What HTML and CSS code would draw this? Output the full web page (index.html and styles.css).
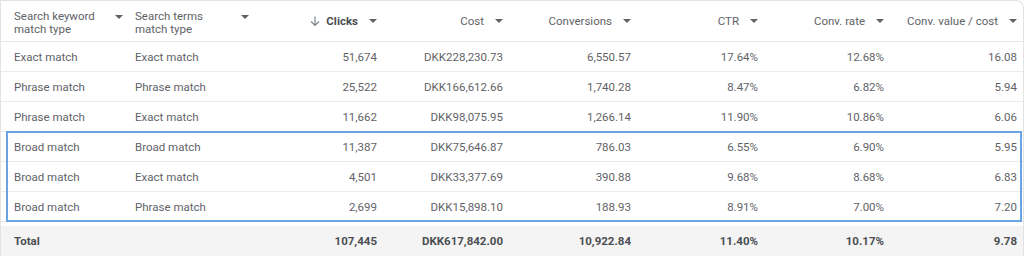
FILE: index.html
```html
<!DOCTYPE html>
<html lang="en">
<head>
  <meta charset="UTF-8" />
  <title>Match type report</title>
  <link rel="stylesheet" href="styles.css">
</head>
<body>
  <div class="card">
    <table class="report">
      <colgroup>
        <col style="width:128px">
        <col style="width:126px">
        <col style="width:128px">
        <col style="width:126px">
        <col style="width:128px">
        <col style="width:127px">
        <col style="width:126px">
        <col>
      </colgroup>
      <thead>
        <tr>
          <th class="txt"><div class="head"><span>Search keyword<br>match type</span><i class="caret"></i></div></th>
          <th class="txt"><div class="head"><span>Search terms<br>match type</span><i class="caret"></i></div></th>
          <th class="sorted"><div class="head num">
            <svg class="arrow" width="10" height="11" viewBox="0 0 10 11"><path d="M5 0.5v9M1 5.5l4 4 4-4" fill="none" stroke="#80868b" stroke-width="1.2"/></svg>
            <span>Clicks</span><i class="caret"></i></div></th>
          <th><div class="head num"><span>Cost</span><i class="caret"></i></div></th>
          <th><div class="head num"><span>Conversions</span><i class="caret"></i></div></th>
          <th><div class="head num"><span>CTR</span><i class="caret"></i></div></th>
          <th><div class="head num"><span>Conv. rate</span><i class="caret"></i></div></th>
          <th><div class="head num"><span>Conv. value / cost</span><i class="caret"></i></div></th>
        </tr>
      </thead>
      <tbody>
        <tr><td>Exact match</td><td>Exact match</td><td>51,674</td><td>DKK228,230.73</td><td>6,550.57</td><td>17.64%</td><td>12.68%</td><td>16.08</td></tr>
        <tr><td>Phrase match</td><td>Phrase match</td><td>25,522</td><td>DKK166,612.66</td><td>1,740.28</td><td>8.47%</td><td>6.82%</td><td>5.94</td></tr>
        <tr><td>Phrase match</td><td>Exact match</td><td>11,662</td><td>DKK98,075.95</td><td>1,266.14</td><td>11.90%</td><td>10.86%</td><td>6.06</td></tr>
        <tr><td>Broad match</td><td>Broad match</td><td>11,387</td><td>DKK75,646.87</td><td>786.03</td><td>6.55%</td><td>6.90%</td><td>5.95</td></tr>
        <tr><td>Broad match</td><td>Exact match</td><td>4,501</td><td>DKK33,377.69</td><td>390.88</td><td>9.68%</td><td>8.68%</td><td>6.83</td></tr>
        <tr><td>Broad match</td><td>Phrase match</td><td>2,699</td><td>DKK15,898.10</td><td>188.93</td><td>8.91%</td><td>7.00%</td><td>7.20</td></tr>
      </tbody>
      <tfoot>
        <tr><td>Total</td><td></td><td>107,445</td><td>DKK617,842.00</td><td>10,922.84</td><td>11.40%</td><td>10.17%</td><td>9.78</td></tr>
      </tfoot>
    </table>
    <div class="highlight"></div>
  </div>
</body>
</html>
```

FILE: styles.css
```css
body {
  margin: 0;
  background: #fff;
  font-family: Roboto, "Liberation Sans", sans-serif;
  font-size: 11.5px;
  color: #5f6368;
}
.card {
  position: relative;
  width: 1022px;
  border: 1px solid #e3e3e3;
  border-bottom: none;
  border-top-right-radius: 8px;
}
.report {
  width: 100%;
  table-layout: fixed;
  border-collapse: separate;
  border-spacing: 0;
}
th, td {
  padding: 0 6px;
  text-align: right;
  white-space: nowrap;
}
td:first-child, th:first-child {
  padding-left: 13px;
}
td:nth-child(1), td:nth-child(2) {
  text-align: left;
}
th {
  height: 40px;
  font-weight: 400;
  color: #5f6368;
  border-bottom: 1px solid #e8e8e8;
}
td {
  height: 29px;
  border-bottom: 1px solid #ebebeb;
}
.head {
  display: flex;
  align-items: center;
  justify-content: space-between;
  line-height: 13px;
  text-align: left;
}
.head.num {
  justify-content: flex-end;
  gap: 11px;
}
.txt .head {
  align-items: flex-start;
  padding-top: 4px;
}
.txt .caret {
  margin-top: 5px;
}
.sorted {
  font-weight: 700;
  color: #4a4e52;
}
.sorted .arrow {
  margin-right: -5px;
}
.caret {
  width: 0;
  height: 0;
  border-left: 4px solid transparent;
  border-right: 4px solid transparent;
  border-top: 4px solid #5f6368;
  flex: none;
}
tfoot td {
  height: 30px;
  border-top: 4px solid #fff;
  border-bottom: 1px solid #e3e3e3;
  background: #f4f4f4;
  font-weight: 700;
  color: #4a4e52;
}
.highlight {
  position: absolute;
  left: 5px;
  top: 130px;
  width: 1012px;
  height: 87px;
  border: 2px solid #6aa3e3;
  pointer-events: none;
}
```
